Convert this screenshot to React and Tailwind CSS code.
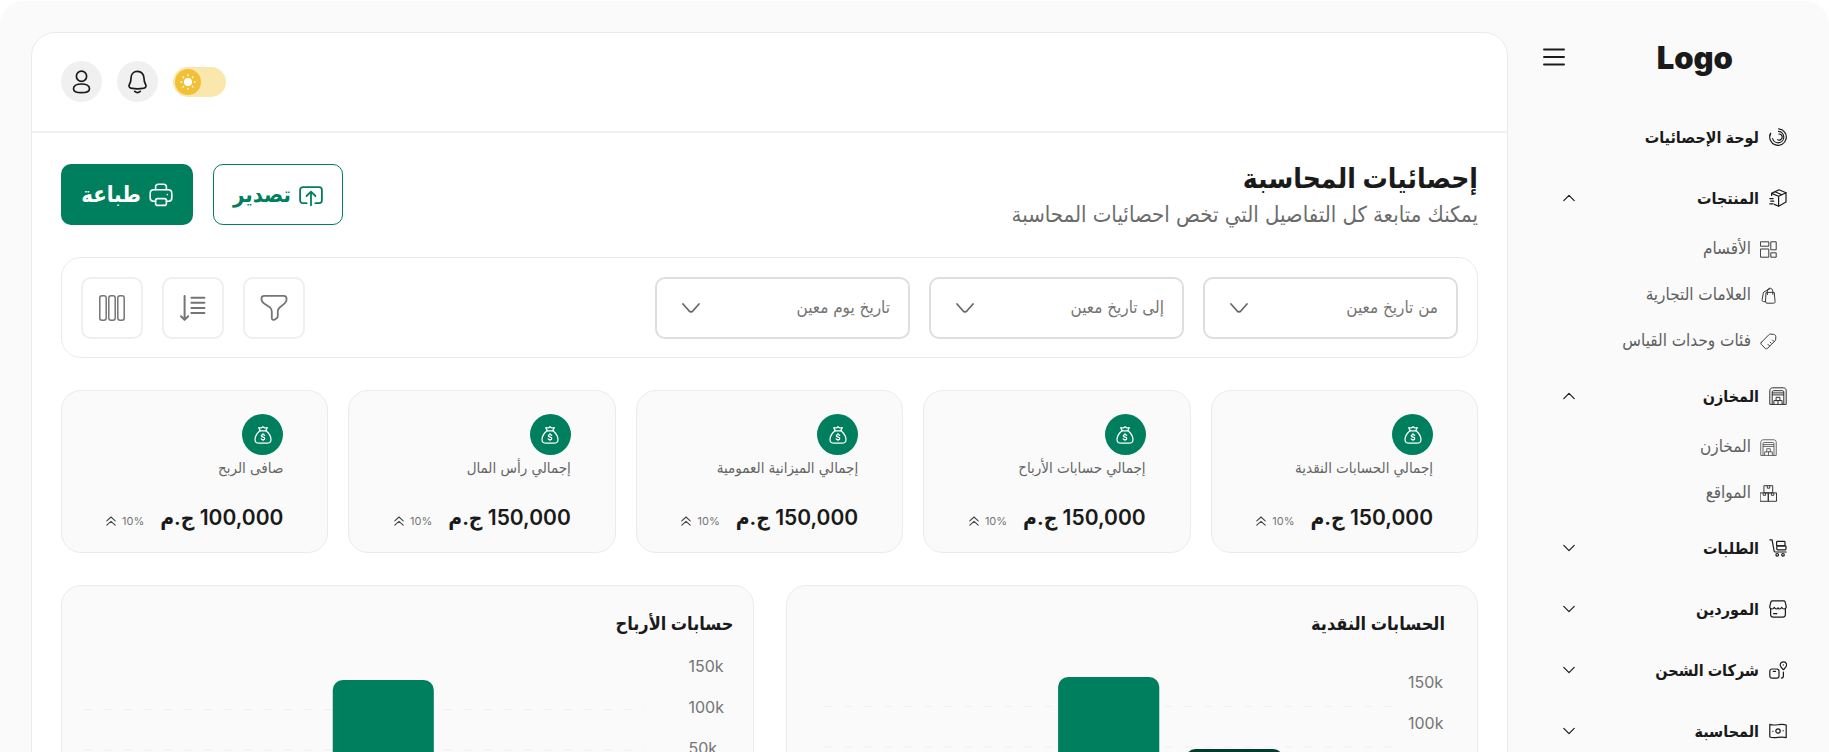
import React from "react";

function Svg({ box = 24, size = "size-6", sw = 1.5, children }) {
  return (
    <svg
      viewBox={`0 0 ${box} ${box}`}
      className={`${size} shrink-0`}
      fill="none"
      stroke="currentColor"
      strokeWidth={sw}
      strokeLinecap="round"
      strokeLinejoin="round"
      aria-hidden="true"
    >
      {children}
    </svg>
  );
}

const Main = ({ children }) => (
  <Svg box={18} size="size-[18px]" sw={1.2}>{children}</Svg>
);
const Sub = ({ children }) => (
  <Svg box={17} size="size-[17px] text-[#3a3a3a]" sw={1}>{children}</Svg>
);

const DashboardIcon = () => (
  <Main>
    <path d="M9.600.8A8.300 8.300 0 1 1 1.600 5.400" />
    <path d="M9.600 3.400A5.700 5.700 0 1 1 3.600 10.600" />
    <path d="M9.800 6A3.100 3.100 0 1 1 8.600 11.800" />
    <path d="M1.600 5.400.9 7.400" />
  </Main>
);
const BoxFastIcon = () => (
  <Main>
    <path d="M2.600 6.600V4.400L10 .8l7 2.900v9.400l-7.400 4.100-4.200-1.800" />
    <path d="M2.600 4.400 9.600 7.300 17 3.700M9.600 7.300v9.900M6 2.800l7 2.900" />
    <path d="M.8 9.600h3.400M1.800 12.200h3M.8 14.800h3.400" />
  </Main>
);
const GridIcon = () => (
  <Sub>
    <rect x=".8" y=".8" width="8" height="4.400" />
    <rect x="11.200" y=".8" width="5" height="8" />
    <rect x=".8" y="8" width="8" height="8.200" />
    <rect x="11.200" y="11.800" width="5" height="4.400" />
  </Sub>
);
const BagsIcon = () => (
  <Sub>
    <path d="M6.400 5.400h7.800l.9 9.200a1.500 1.500 0 0 1-1.500 1.600H7a1.500 1.500 0 0 1-1.500-1.600z" />
    <path d="M7.400 7.600V4.200c0-4 5-4 5.400 0v3.200" />
    <path d="M5.200 14.600H3.600c-1 0-1.700-.8-1.500-1.800l1.200-6.600c.2-1 .7-1.600 1.600-1.800L9.600 2" />
  </Sub>
);
const RulerIcon = () => (
  <Sub>
    <path d="M1.500 9.200 8.800 1.800c.5-.5 1-.7 1.700-.7l3 .3c1.600.2 2.300 1 2.300 2.300l-.1 2.500c0 .7-.3 1.200-.8 1.700l-7.200 7.300c-.8.8-1.800.8-2.600 0l-3.600-3.500c-.8-.8-.8-1.700 0-2.500z" />
    <path d="m8 11.400 1.500 1.500M10.300 9.200l1 1M12.500 7l1.500 1.500" />
  </Sub>
);
const GarageShape = () => (
  <>
    <path d="M.8 17V3.600C.8 2 2 .8 3.600.8h10.800c1.600 0 2.800 1.200 2.800 2.800V17z" />
    <path d="M3.200 17V4.900c0-.7.5-1.200 1.200-1.200h9.200c.7 0 1.200.5 1.200 1.200V17" />
    <path d="M3.600 5.900h10.800M3.600 7.900h10.800" />
    <path d="M7.100 13.500v-3.200h3.800v3.200M4.900 17v-3.400h8.200V17M9 13.600V17" />
  </>
);
const GarageIcon = () => (
  <Svg box={18} size="size-[18px]" sw={0.9}><GarageShape /></Svg>
);
const GarageSmallIcon = () => (
  <Svg box={18} size="size-[17px] text-[#3a3a3a]" sw={0.8}><GarageShape /></Svg>
);
const BoxesIcon = () => (
  <Sub>
    <path d="M4.300.7h8.400v7.200H4.300zM.5 7.900h8v8.400h-8zM8.500 7.900h8v8.400h-8z" />
    <path d="M7.300.9v2.300h2.400V.9M3.200 8v2.300h2.400V8M11.400 8v2.300h2.400V8" />
  </Sub>
);
const TrolleyIcon = () => (
  <Main>
    <path d="M.8.8h2.300l2 11.200c.1.7.5 1 1.200 1h10.900" />
    <rect x="7.600" y="2.400" width="8.400" height="4.400" rx=".8" />
    <rect x="7.800" y="6.800" width="9.200" height="4" rx=".8" />
    <circle cx="8.200" cy="15.800" r="1.300" />
    <circle cx="14" cy="15.800" r="1.300" />
  </Main>
);
const ShopIcon = () => (
  <Main>
    <path d="M1.600 8.400v6.200c0 1.600 1 2.500 2.500 2.500h9.800c1.500 0 2.500-.9 2.500-2.500V8.400" />
    <path d="M3.300.9h11.400c.7 0 1.200.4 1.400 1l1.100 4.400c.3 1.500-.7 2.700-2.100 2.700-1.200 0-2-.7-2.300-1.700C12.200 8.500 11.400 9 10.600 9 9.800 9 9.300 8.500 9 7.700 8.700 8.500 8.200 9 7.400 9c-.8 0-1.600-.5-2.200-1.700C4.900 8.300 4.100 9 2.900 9 1.500 9 .5 7.800.8 6.300l1.100-4.400c.2-.6.7-1 1.400-1z" />
    <path d="M4.600 13.700h3.200" />
  </Main>
);
const ShippingIcon = () => (
  <Main>
    <rect x=".8" y="8" width="9.200" height="9.200" rx="2.200" />
    <path d="M4.300 10.400h2.200" />
    <path d="M14.400 8.700c-1.500-1.500-3.200-2.700-3.200-4.700a3.200 3.200 0 0 1 6.400 0c0 2-1.700 3.200-3.200 4.700zM14.300 3.900h.1" />
    <path d="M14.400 11v3.800c0 1.500-.6 2.300-2 2.300" />
  </Main>
);
const MoneyIcon = () => (
  <Main>
    <path d="M.8 2.400c5.400 2 10.700-1.300 16.400.6v12.600c-5.700-1.900-11 1.400-16.400-.6z" />
    <circle cx="9" cy="9" r="2.200" />
    <path d="M3.900 9.300v.1M14.100 8.700v.1" />
  </Main>
);

const UserIcon = () => (
  <Svg sw={1.7}>
    <circle cx="11.500" cy="6.300" r="5.100" />
    <path d="M11.500 14c4.700 0 8 2 8 4.700 0 2.600-2.300 4-8 4s-8-1.400-8-4c0-2.700 3.300-4.700 8-4.700z" />
  </Svg>
);
const BellIcon = () => (
  <Svg sw={1.7}>
    <path d="M11.500 1.400C7.600 1.400 5 4.300 5 8.200c0 3.400-.8 4.800-1.600 6.300-.9 1.700-.3 3.100 1.600 3.600 4 .9 9 .9 13 0 1.900-.5 2.500-1.900 1.600-3.600-.8-1.500-1.600-2.900-1.600-6.300 0-3.900-2.600-6.800-6.500-6.800z" />
    <path d="M8.800 21.400c1.500 1.300 3.900 1.300 5.400 0" />
  </Svg>
);
const SunIcon = () => (
  <svg viewBox="0 0 24 24" className="size-4" fill="white" stroke="white" aria-hidden="true">
    <circle cx="12" cy="12" r="6" stroke="none" />
    <g strokeWidth="2" strokeLinecap="round">
      <path d="M12 1.500v1M12 21.500v1M1.500 12h1M21.500 12h1M4.600 4.600l.7.7M18.700 18.700l.7.7M4.600 19.400l.7-.7M18.700 5.300l.7-.7" />
    </g>
  </svg>
);
const MenuIcon = () => (
  <Svg size="size-6" sw={1.9}>
    <path d="M2 4.500h20M2 12h20M2 19.500h20" />
  </Svg>
);
const PrintIcon = () => (
  <Svg sw={1.6}>
    <path d="M6.600 6.800V4c0-1.700.9-2.700 2.700-2.700h5.400c1.800 0 2.700 1 2.700 2.700v2.800" />
    <path d="M6.600 18.200H4.400c-2 0-3.200-1.200-3.200-3.200v-4.600c0-2.200 1.400-3.600 3.600-3.600h14.400c2.200 0 3.600 1.400 3.600 3.600V15c0 2-1.200 3.200-3.200 3.200h-2.200" />
    <path d="M8.600 15.600h6.800c1.300 0 2 .7 2 2v2.800c0 1.300-.7 2-2 2H8.600c-1.300 0-2-.7-2-2v-2.800c0-1.300.7-2 2-2zM18.300 11.500v.1" />
  </Svg>
);
const ExportIcon = () => (
  <Svg sw={1.8}>
    <path d="M7.600 20.200H4c-1.800 0-2.900-1.100-2.900-2.900V7c0-1.800 1.100-2.900 2.900-2.900h16c1.800 0 2.900 1.100 2.900 2.900v10.300c0 1.800-1.100 2.900-2.900 2.900h-3.600" />
    <path d="M12 22.300V9M7.600 13 12 8.700l4.400 4.300" />
  </Svg>
);
const FilterIcon = () => (
  <Svg box={28} size="size-7" sw={1.8}>
    <path d="M4.200 1.800h19.600c1.700 0 2.700 1 2.700 2.600v1.700c0 1.300-.8 2.400-1.900 3.300l-4.900 4.100c-1.300 1.100-1.900 2.200-1.900 3.800v4.600c0 1.100-.6 2-1.500 2.600l-1.500 1c-1.400.9-3 .1-3-1.500v-6.500c0-1.500-.6-2.800-1.700-4L3.400 8.900c-1-1.100-1.900-2.300-1.900-3.500V4.400c0-1.600 1-2.600 2.700-2.600z" />
  </Svg>
);
const SortIcon = () => (
  <Svg box={28} size="size-7" sw={2}>
    <path d="M5.600 2v23.600M2 22.200l3.600 3.700 3.600-3.700" />
    <path d="M12.400 3.700h13M12.400 8.800h13M12.400 13.900h13M12.400 19h13" />
  </Svg>
);
const ColumnsIcon = () => (
  <Svg box={28} size="size-7" sw={1.5}>
    <rect x="1.800" y="1.800" width="6.400" height="24.400" rx="2.200" />
    <rect x="10.800" y="1.800" width="6.400" height="24.400" rx="2.200" />
    <rect x="19.800" y="1.800" width="6.400" height="24.400" rx="2.200" />
  </Svg>
);
const MoneyBagIcon = () => (
  <Svg box={18} size="size-[18px]" sw={1.2}>
    <path d="M6 4.800h6M5.900 4.800C3.200 7.200 1 10.400 1 13.400 1 16 2.600 17.200 5.200 17.200h7.600c2.600 0 4.200-1.200 4.200-3.800 0-3-2.200-6.200-4.900-8.600" />
    <path d="M6.200 4.600 4.700 1.700l2.600.3L9 .7l1.700 1.300 2.600-.3-1.500 2.900" />
    <path d="M10.700 9.300c-.4-.5-1-.7-1.700-.7-1 0-1.700.4-1.700 1.200 0 1.800 3.500.7 3.500 2.600 0 .8-.7 1.300-1.800 1.300-.8 0-1.400-.3-1.800-.9M9 7.700v.9M9 13.700v.9" />
  </Svg>
);
const DoubleUpIcon = () => (
  <Svg box={10} size="size-[10px]" sw={1.1}>
    <path d="M.8 4.900 5 1l4.200 3.900M.8 9.200 5 5.300l4.200 3.900" />
  </Svg>
);
const Chevron = ({ up }) => (
  <Svg box={12} size="size-3" sw={1.2}>
    <path d={up ? "M.8 8.600 6 3.400l5.200 5.200" : "M.8 3.400 6 8.600l5.200-5.200"} />
  </Svg>
);

const NAV = [
  { label: "لوحة الإحصائيات", Icon: DashboardIcon },
  {
    label: "المنتجات",
    Icon: BoxFastIcon,
    items: [
      { label: "الأقسام", Icon: GridIcon },
      { label: "العلامات التجارية", Icon: BagsIcon },
      { label: "فئات وحدات القياس", Icon: RulerIcon },
    ],
  },
  {
    label: "المخازن",
    Icon: GarageIcon,
    items: [
      { label: "المخازن", Icon: GarageSmallIcon },
      { label: "المواقع", Icon: BoxesIcon },
    ],
  },
  { label: "الطلبات", Icon: TrolleyIcon, closed: true },
  { label: "الموردين", Icon: ShopIcon, closed: true },
  { label: "شركات الشحن", Icon: ShippingIcon, closed: true },
  { label: "المحاسبة", Icon: MoneyIcon, closed: true },
];

function Sidebar() {
  return (
    <aside className="flex w-[321px] shrink-0 flex-col pl-[34px] pr-[42px] pt-8">
      <div className="flex h-12 items-center justify-between pr-[54px]">
        <span className="text-[31px] font-black leading-none">Logo</span>
        <button type="button" aria-label="القائمة"><MenuIcon /></button>
      </div>
      <nav className="mt-9 flex flex-col gap-[21px]">
        {NAV.map(({ label, Icon, items, closed }) => (
          <div key={label}>
            {items || closed ? (
              <button type="button" aria-expanded={!closed} className="flex h-10 w-full items-center gap-[10px] pl-[21px] text-base font-semibold">
                <Icon />
                <span>{label}</span>
                <span className="mr-auto"><Chevron up={!closed} /></span>
              </button>
            ) : (
              <a href="#dashboard" className="flex h-10 items-center gap-[10px] text-base font-semibold">
                <Icon />
                <span>{label}</span>
              </a>
            )}
            {items && (
              <ul className="-mb-px mt-4 flex flex-col gap-4 pr-[10px] text-[17px] text-[#5f5f5f]">
                {items.map((item) => (
                  <li key={item.label}>
                    <a href="#section" className="flex h-[30px] items-center gap-[9px]">
                      <item.Icon />
                      <span>{item.label}</span>
                    </a>
                  </li>
                ))}
              </ul>
            )}
          </div>
        ))}
      </nav>
    </aside>
  );
}

function DateSelect({ label }) {
  return (
    <div className="relative w-[255px]">
      <select aria-label={label} className="h-[62px] w-full appearance-none rounded-[10px] border-2 border-[#dedede] bg-white pl-14 pr-[18px] text-[17px] text-[#757575]">
        <option>{label}</option>
      </select>
      <svg viewBox="0 0 18 10" className="pointer-events-none absolute left-[27px] top-[26px] h-[10px] w-[18px] text-[#666]" fill="none" stroke="currentColor" strokeWidth="1.700" strokeLinecap="round" strokeLinejoin="round" aria-hidden="true">
        <path d="m1 1 6 6.800c1.200 1.300 2.800 1.300 4 0L17 1" />
      </svg>
    </div>
  );
}

function ToolButton({ label, children }) {
  return (
    <button type="button" aria-label={label} className="flex size-[62px] items-center justify-center rounded-[10px] border-2 border-[#efefef] text-[#757575]">
      {children}
    </button>
  );
}

function StatCard({ label, value }) {
  return (
    <article className="h-[163px] min-w-0 flex-1 rounded-[20px] border border-[#ebebeb] bg-[#fafafa] pl-8 pr-11 pt-[23px]">
      <span className="flex size-[41px] items-center justify-center rounded-full bg-[#007f5f] text-white">
        <MoneyBagIcon />
      </span>
      <h3 className="mt-px whitespace-nowrap text-[15px] leading-6 text-[#666]">{label}</h3>
      <div className="mt-[22px] flex items-center gap-4 whitespace-nowrap">
        <p className="text-[21px] font-semibold leading-8">{value} ج.م</p>
        <p className="flex items-center gap-[6px] pt-1.5 text-[11px] leading-4 text-[#757575]">
          <span dir="ltr">10%</span>
          <span className="text-[#444]"><DoubleUpIcon /></span>
        </p>
      </div>
    </article>
  );
}

function ChartCard({ title, pad, body, gap, ticks, firstLine, bars }) {
  return (
    <section className={`min-w-0 rounded-[20px] border border-[#ebebeb] bg-[#fafafa] pb-8 pt-[26px] ${pad}`}>
      <h2 className="text-lg font-semibold leading-6">{title}</h2>
      <div className={`flex ${body} ${gap}`}>
        <ul dir="ltr" className="w-[37px] text-base leading-[41px] text-[#757575]">
          {ticks.map((tick) => <li key={tick}>{tick}</li>)}
        </ul>
        <svg className="h-[300px] min-w-0 flex-1" aria-hidden="true">
          {[0, 1, 2, 3, 4].map((i) => (
            <line key={i} x1="0" x2="100%" y1={firstLine + i * 40.5} y2={firstLine + i * 40.5} stroke="#f0f0f0" strokeWidth="1" strokeDasharray="8 12" />
          ))}
          {bars.map((bar) => (
            <rect key={bar.x} x={bar.x} y={bar.y} width={bar.w} height={300 - bar.y + 12} rx="10" fill={bar.fill} />
          ))}
        </svg>
      </div>
    </section>
  );
}

export default function App() {
  return (
    <div dir="rtl" lang="ar" className="h-screen overflow-hidden bg-white pt-px font-['Inter','DejaVu_Sans_Condensed','DejaVu_Sans',sans-serif] text-[#1a1a1a]">
      <div className="flex min-h-full rounded-t-3xl bg-[#fafafa]">
        <Sidebar />
        <main className="ml-[31px] mt-[31px] min-w-0 flex-1 rounded-t-3xl border border-[#ebebeb] bg-white">
          <header className="flex items-center justify-end gap-[15px] border-b-2 border-[#f0f0f0] px-[29px] pb-[29px] pt-7">
            <label className="relative block h-[30px] w-[53px] cursor-pointer rounded-full bg-[#f9e7ae]">
              <input type="checkbox" role="switch" aria-label="الوضع الفاتح" className="sr-only" />
              <span className="absolute left-0.5 top-0.5 flex size-[26px] items-center justify-center rounded-full bg-[#f2c035]">
                <SunIcon />
              </span>
            </label>
            <button type="button" aria-label="الإشعارات" className="flex size-[41px] items-center justify-center rounded-full bg-[#f0f0f0]"><BellIcon /></button>
            <button type="button" aria-label="الحساب" className="flex size-[41px] items-center justify-center rounded-full bg-[#f0f0f0]"><UserIcon /></button>
          </header>

          <div className="flex flex-col gap-8 px-[29px] pt-[31px]">
            <div className="flex h-[61px] items-start justify-between">
              <div>
                <h1 className="text-[28px] font-bold leading-7">إحصائيات المحاسبة</h1>
                <p className="mt-1 text-[22px] leading-9 text-[#6b6b6b]">يمكنك متابعة كل التفاصيل التي تخص احصائيات المحاسبة</p>
              </div>
              <div className="flex gap-5">
                <button type="button" className="flex h-[61px] w-[130px] items-center justify-center gap-2 rounded-[10px] border border-[#007f5f] text-[22px] font-semibold text-[#007f5f]">
                  <ExportIcon />
                  تصدير
                </button>
                <button type="button" className="flex h-[61px] w-[132px] items-center justify-center gap-2 rounded-[10px] bg-[#007f5f] text-[22px] font-semibold text-white">
                  <PrintIcon />
                  طباعة
                </button>
              </div>
            </div>

            <div className="flex h-[101px] items-center justify-between rounded-[20px] border border-[#ebebeb] px-[19px]">
              <div className="flex gap-[19px]">
                <DateSelect label="من تاريخ معين" />
                <DateSelect label="إلى تاريخ معين" />
                <DateSelect label="تاريخ يوم معين" />
              </div>
              <div className="flex gap-[19px]">
                <ToolButton label="تصفية"><FilterIcon /></ToolButton>
                <ToolButton label="ترتيب"><SortIcon /></ToolButton>
                <ToolButton label="الأعمدة"><ColumnsIcon /></ToolButton>
              </div>
            </div>

            <div className="flex gap-5">
              <StatCard label="إجمالي الحسابات النقدية" value="150,000" />
              <StatCard label="إجمالي حسابات الأرباح" value="150,000" />
              <StatCard label="إجمالي الميزانية العمومية" value="150,000" />
              <StatCard label="إجمالي رأس المال" value="150,000" />
              <StatCard label="صافى الربح" value="100,000" />
            </div>

            <div className="grid grid-cols-2 gap-8">
              <ChartCard
                title="الحسابات النقدية"
                pad="pl-[38px] pr-8"
                body="mt-[26px]"
                gap="gap-[15px]"
                ticks={["150k", "100k", "50k"]}
                firstLine={44.5}
                bars={[
                  { x: "41%", w: "17.8%", y: 15, fill: "#007f5f" },
                  { x: "63.4%", w: "17.2%", y: 87, fill: "#003d2e" },
                ]}
              />
              <ChartCard
                title="حسابات الأرباح"
                pad="pl-[22px] pr-[19px]"
                body="mt-[10px] pr-2"
                gap="gap-[43px]"
                ticks={["150k", "100k", "50k"]}
                firstLine={63.5}
                bars={[{ x: "44.3%", w: "18%", y: 34, fill: "#007f5f" }]}
              />
            </div>
          </div>
        </main>
      </div>
    </div>
  );
}
